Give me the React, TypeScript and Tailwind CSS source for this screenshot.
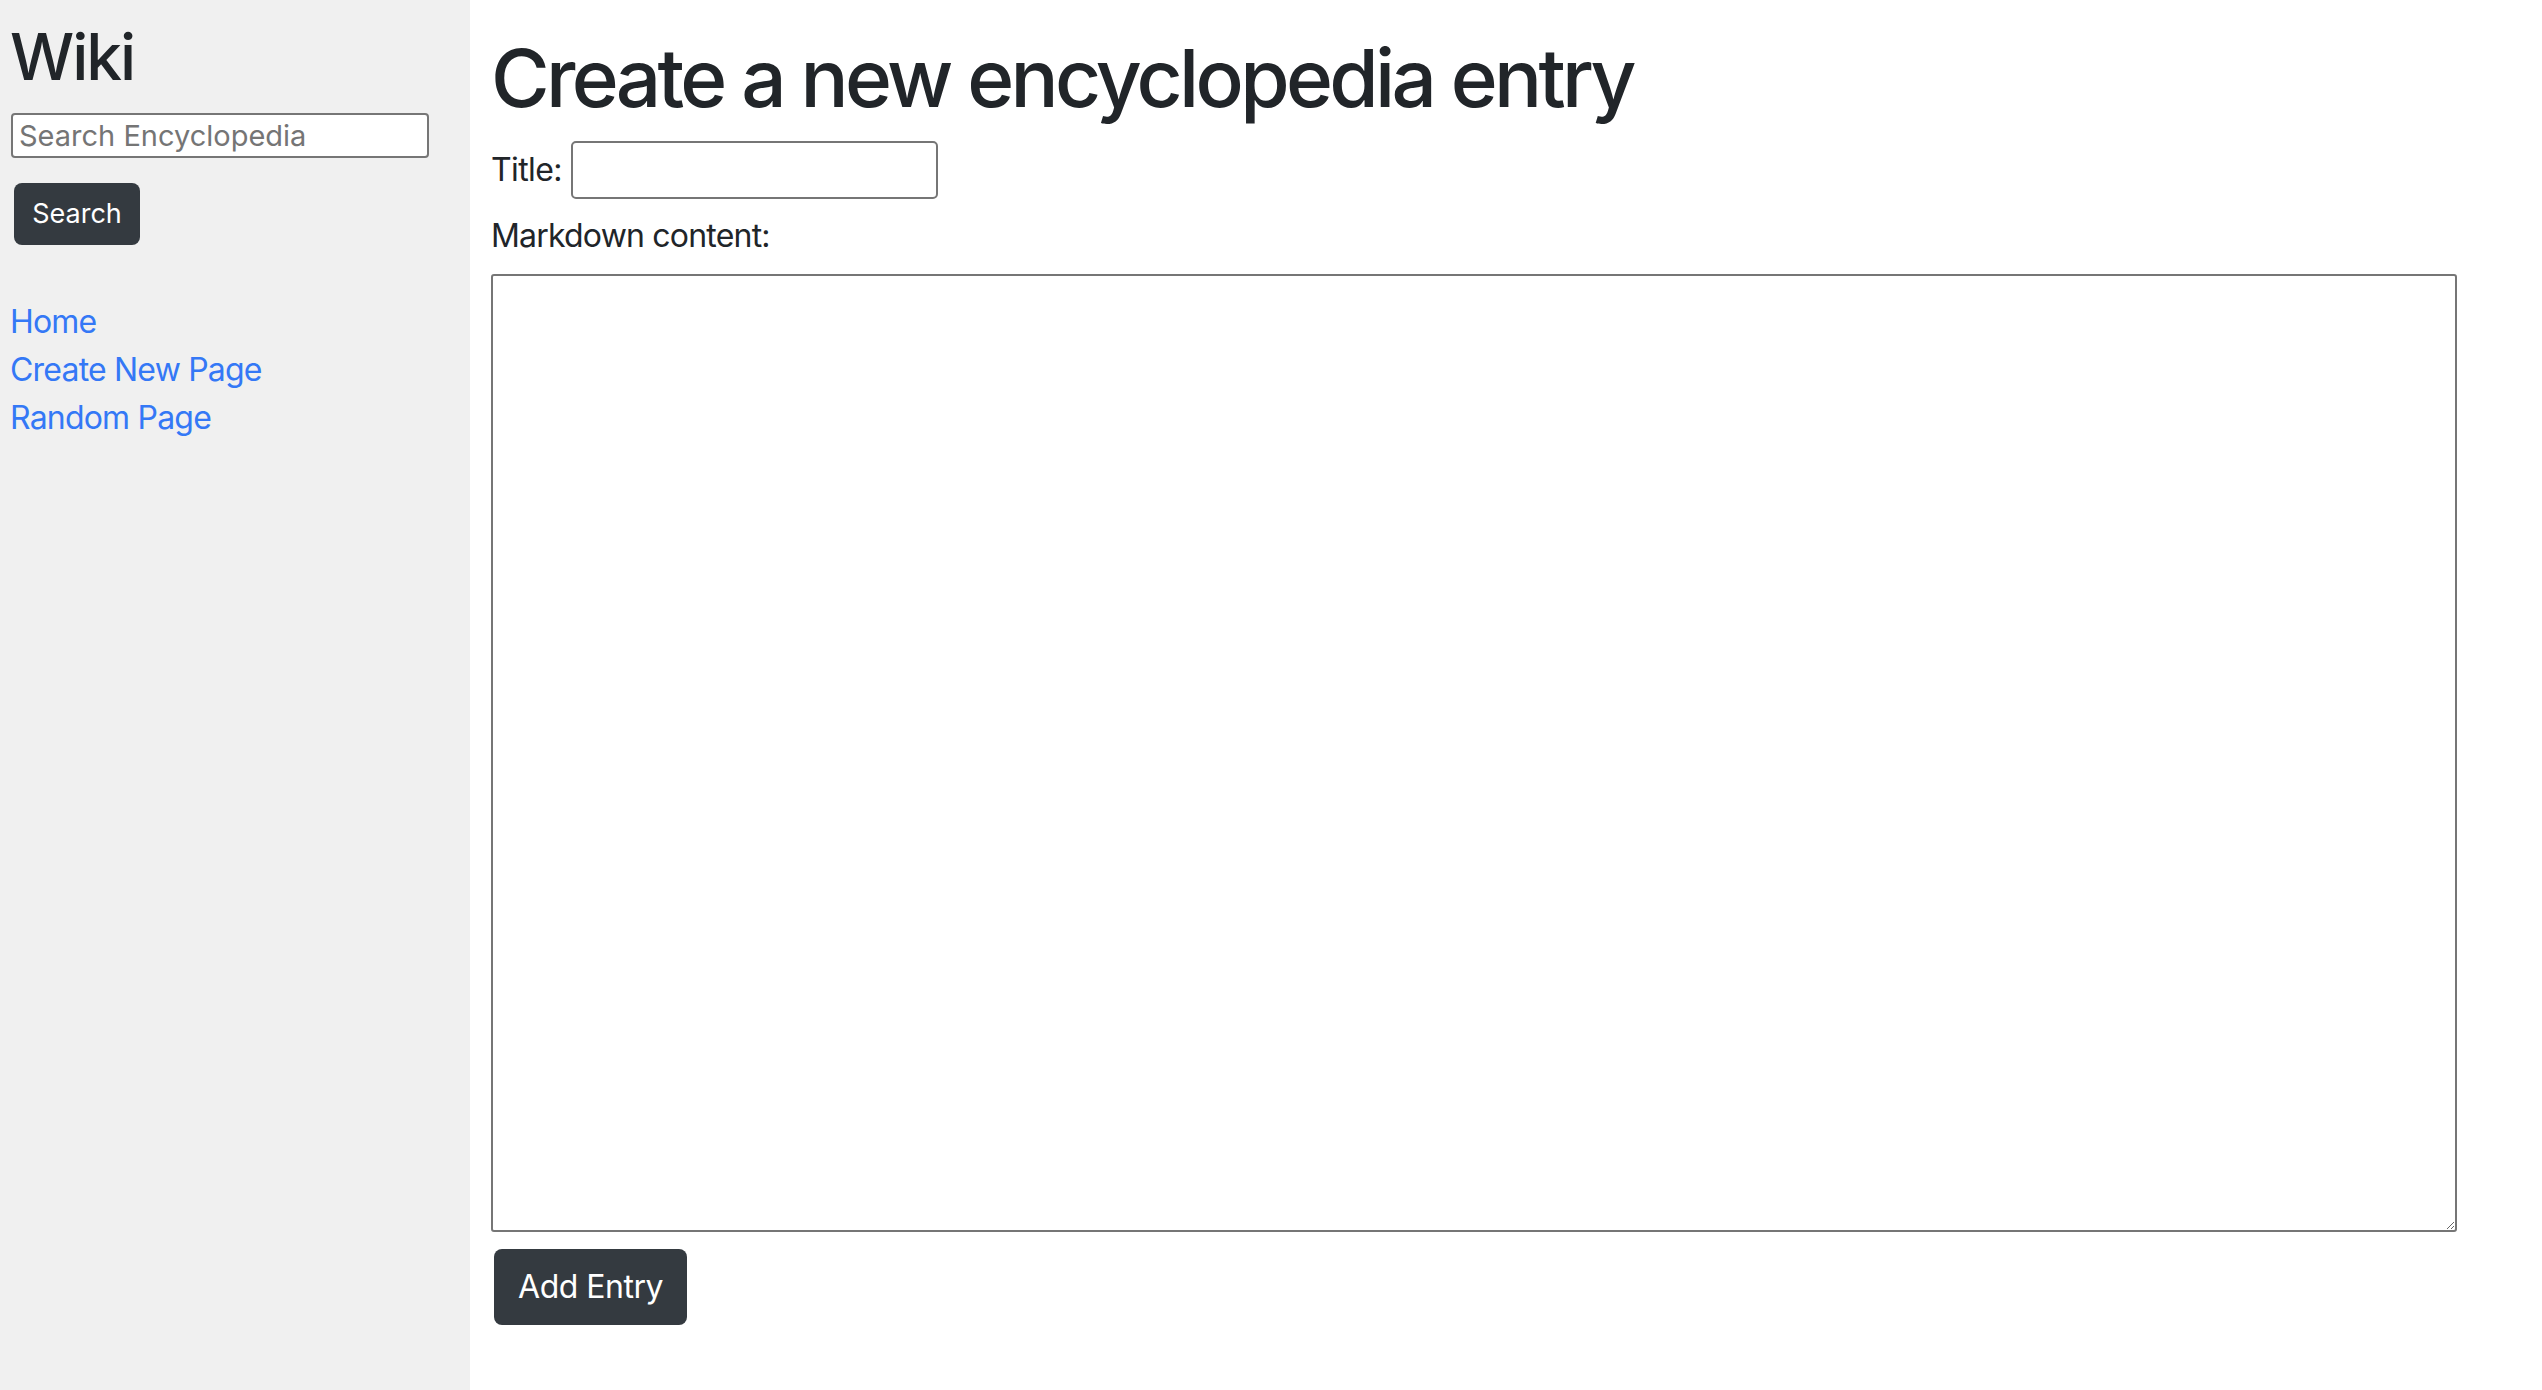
import { useState } from 'react';

const font = { fontFamily: 'Inter, "Liberation Sans", sans-serif' };

function Sidebar() {
  return (
    <div className="w-[470px] shrink-0 bg-[#f0f0f0] pl-[10px] pr-[10px]">
      <h2 className="mt-[18px] text-[64px] leading-[77px] font-medium text-[#212529] tracking-[-2px]">Wiki</h2>

      <form className="mt-[18px]" onSubmit={(e) => e.preventDefault()}>
        <input
          type="text"
          placeholder="Search Encyclopedia"
          className="ml-px block h-[45px] w-[418px] rounded-[4px] border-2 border-[#767676] bg-white px-[6px] text-[29px] text-[#212529] outline-none placeholder:text-[#757575]"
        />
        <button
          type="submit"
          className="ml-[4px] mt-[25px] h-[62px] w-[126px] rounded-[8px] bg-[#343a40] text-[27px] text-white"
        >
          Search
        </button>
      </form>

      {/* Nav links */}
      <div className="mt-[53px] flex flex-col text-[32px] leading-[48px] tracking-[-0.8px]">
        <a href="#" className="text-[#3478f6] hover:underline">Home</a>
        <a href="#" className="text-[#3478f6] hover:underline">Create New Page</a>
        <a href="#" className="text-[#3478f6] hover:underline">Random Page</a>
      </div>
    </div>
  );
}

export default function App() {
  const [title, setTitle] = useState('');
  const [content, setContent] = useState('');

  return (
    <div className="flex min-h-[1390px] bg-white text-[#212529]" style={font}>
      <Sidebar />

      <div className="flex-1 pl-[21px]">
        <h1 className="pt-[30px] text-[80px] leading-[96px] font-medium tracking-[-3.7px]">
          Create a new encyclopedia entry
        </h1>

        <form onSubmit={(e) => e.preventDefault()}>
          <div className="mt-[15px] flex items-center text-[32px] leading-[48px] tracking-[-0.6px]">
            <label className="w-[80px]">Title:</label>
            <input
              type="text"
              value={title}
              onChange={(e) => setTitle(e.target.value)}
              className="h-[58px] w-[367px] rounded-[5px] border-2 border-[#767676] bg-white px-[4px] text-[27px] outline-none"
            />
          </div>

          <div className="mt-[13px] text-[32px] leading-[48px] tracking-[-0.8px]">Markdown content:</div>

          <textarea
            value={content}
            onChange={(e) => setContent(e.target.value)}
            className="mt-[14px] block h-[958px] w-[1966px] rounded-[3px] border-2 border-[#767676] bg-white p-[4px] text-[27px] outline-none"
          />

          <button
            type="submit"
            className="ml-[3px] mt-[17px] h-[76px] w-[193px] rounded-[8px] bg-[#343a40] text-[32px] tracking-[-0.5px] text-white"
          >
            Add Entry
          </button>
        </form>
      </div>
    </div>
  );
}
